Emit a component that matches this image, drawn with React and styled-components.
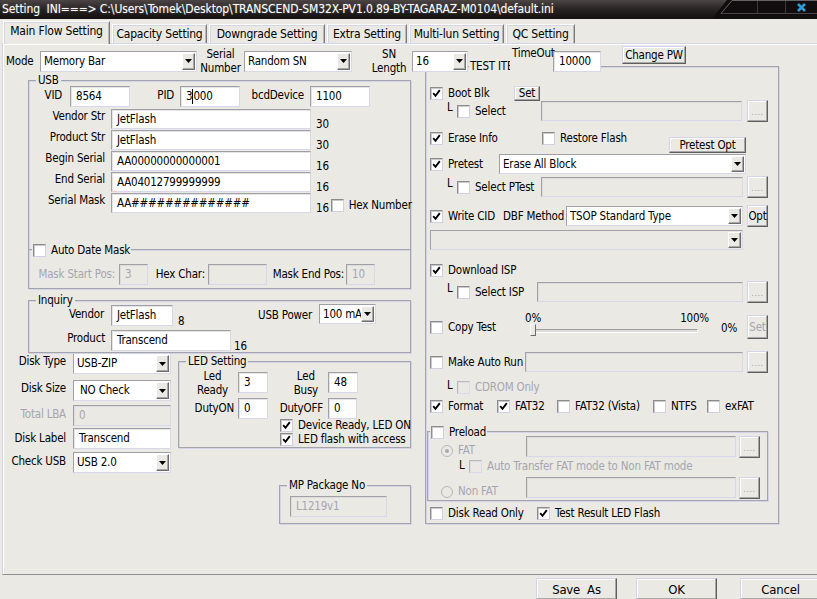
import React from "react";
import styled, { createGlobalStyle, css } from "styled-components";

const BG = "#eae9e4";
const DIS = "#a6a6b0";
const LAV = "#d3d3ea";
const EDGE = "#a4a4ac";

const TITLE =
  "Setting  INI===> C:\\Users\\Tomek\\Desktop\\TRANSCEND-SM32X-PV1.0.89-BY-TAGARAZ-M0104\\default.ini";

const GlobalStyle = createGlobalStyle`
  * { box-sizing: border-box; }
  html, body { margin: 0; padding: 0; background: ${BG}; }
  body {
    font-family: "DejaVu Sans Condensed", "Liberation Sans Narrow", "Liberation Sans", sans-serif;
    font-size: 11.5px;
    letter-spacing: -0.2px;
    line-height: 13px;
    color: #000;
  }
`;

// shared spacing props
const place = css`
  margin-top: ${(p) => p.$mt || 0}px;
  margin-left: ${(p) => p.$ml || 0}px;
  margin-bottom: ${(p) => p.$mb || 0}px;
  align-self: ${(p) => p.$self || "auto"};
`;

const Window = styled.div`
  width: 817px;
  height: 599px;
  overflow: hidden;
  display: flex;
  flex-direction: column;
  background: ${BG};
`;

const TitleBar = styled.div`
  flex: none;
  height: 19px;
  display: flex;
  align-items: center;
  padding-left: 2px;
  color: #fff;
  background: linear-gradient(to bottom, #4d4545 0%, #2b2525 45%, #131010 100%);
`;

const TitleText = styled.span`
  flex: 1;
  font-size: 12px;
  letter-spacing: -0.1px;
  white-space: pre;
  overflow: hidden;
  text-shadow: 0 0 2px rgba(255, 255, 255, 0.35);
`;

const CtlSvg = styled.svg`
  flex: none;
`;

const TabStrip = styled.div`
  flex: none;
  height: 24px;
  display: flex;
  align-items: flex-end;
  gap: 2px;
  padding-left: 3px;
  position: relative;
  z-index: 3;
`;

const Tab = styled.div`
  flex: none;
  width: ${(p) => p.$w}px;
  height: ${(p) => (p.$active ? 23 : 19)}px;
  margin-bottom: ${(p) => (p.$active ? -1 : 0)}px;
  padding-bottom: ${(p) => (p.$active ? 3 : 0)}px;
  display: flex;
  align-items: center;
  justify-content: center;
  white-space: nowrap;
  font-size: 12px;
  background: ${BG};
  border: 1px solid;
  border-bottom: none;
  border-color: #fff #7c7c7c transparent #fff;
  box-shadow: inset 1px 1px 0 ${LAV}, inset -1px 0 0 #b8b8b8;
`;

const Panel = styled.div`
  flex: none;
  height: 532px;
  margin-left: 2px;
  border-top: 1px solid ${LAV};
  border-left: 1px solid ${LAV};
  border-bottom: 1px solid #8c8c8c;
  box-shadow: inset 1px 1px 0 #fff;
`;

const TopRow = styled.div`
  position: relative;
  z-index: 2;
  height: 32px;
  padding-top: 2px;
  display: flex;
  align-items: center;
`;

const Columns = styled.div`
  display: flex;
  align-items: flex-start;
`;

const LeftCol = styled.div`
  flex: none;
  width: 401px;
  margin-left: 7px;
  display: flex;
  flex-direction: column;
`;

const RightCol = styled.div`
  flex: none;
  margin-left: 14px;
  margin-top: -10px;
`;

const Group = styled.div`
  position: relative;
  flex: none;
  width: ${(p) => p.$w}px;
  height: ${(p) => p.$h}px;
  border: 1px solid ${EDGE};
  box-shadow: inset 1px 1px 0 ${LAV}, 1px 1px 0 ${LAV};
  display: flex;
  flex-direction: column;
  ${place}
`;

const SubGroup = styled.div`
  position: relative;
  flex: none;
  margin-top: auto;
  height: 39px;
  border-top: 1px solid ${EDGE};
  box-shadow: inset 0 1px 0 ${LAV};
`;

const Legend = styled.div`
  position: absolute;
  top: ${(p) => p.$top ?? -8}px;
  left: ${(p) => p.$left ?? 7}px;
  padding: 0 ${(p) => p.$pad ?? 2}px;
  background: ${BG};
  line-height: 14px;
  display: flex;
  align-items: center;
  gap: 4px;
  white-space: nowrap;
`;

const Row = styled.div`
  flex: none;
  display: flex;
  align-items: ${(p) => p.$align || "center"};
  height: ${(p) => (p.$h ? `${p.$h}px` : "auto")};
  margin-top: ${(p) => p.$mt || 0}px;
  padding-left: ${(p) => p.$pl || 0}px;
`;

const Label = styled.div`
  flex: none;
  width: ${(p) => p.$w}px;
  padding-right: ${(p) => p.$pr ?? 6}px;
  padding-top: ${(p) => p.$pt ?? 0}px;
  text-align: ${(p) => p.$align || "right"};
  color: ${(p) => (p.$disabled ? DIS : "#000")};
  white-space: nowrap;
  ${place}
`;

const Stack = styled.div`
  flex: none;
  width: ${(p) => p.$w}px;
  height: ${(p) => p.$h || 21}px;
  display: flex;
  align-items: center;
  justify-content: ${(p) => p.$justify || "center"};
  padding-right: ${(p) => p.$pr || 0}px;
  ${place}
`;

const Lines = styled.span`
  text-align: center;
  line-height: 14px;
  white-space: nowrap;
`;

const Count = styled.span`
  flex: none;
  width: ${(p) => (p.$w ? `${p.$w}px` : "auto")};
  align-self: flex-end;
  margin-left: ${(p) => p.$ml ?? 5}px;
  margin-bottom: -2px;
`;

const TextBox = styled.div`
  flex: none;
  width: ${(p) => p.$w}px;
  height: ${(p) => p.$h || 21}px;
  display: flex;
  align-items: center;
  padding-left: ${(p) => p.$pl ?? 5}px;
  white-space: nowrap;
  overflow: hidden;
  background: ${(p) => (p.$disabled ? BG : "#fff")};
  color: ${(p) => (p.$disabled ? DIS : "#000")};
  border: 1px solid;
  border-color: #a0a0a6 #d8d8ec #d8d8ec #a0a0a6;
  box-shadow: inset 1px 1px 0 ${(p) => (p.$disabled ? "#dcdcdc" : "#e4e4e4")};
  ${place}
`;

const Caret = styled.span`
  display: inline-block;
  width: 1px;
  height: 15px;
  background: #000;
`;

const SelectBox = styled.div`
  flex: none;
  width: ${(p) => p.$w}px;
  height: ${(p) => p.$h || 21}px;
  display: flex;
  align-items: stretch;
  padding: 1px 1px 1px 3px;
  background: ${(p) => (p.$disabled ? BG : "#fff")};
  border: 1px solid;
  border-color: #a0a0a6 #d8d8ec #d8d8ec #a0a0a6;
  ${place}
`;

const SelectText = styled.span`
  flex: 1;
  display: flex;
  align-items: center;
  white-space: nowrap;
  overflow: hidden;
`;

const ArrowBtn = styled.span`
  flex: none;
  width: 13px;
  display: flex;
  align-items: center;
  justify-content: center;
  background: ${BG};
  border: 1px solid;
  border-color: #fff #6c6c6c #6c6c6c #fff;
  box-shadow: inset -1px -1px 0 #a8a8a8;
`;

const Btn = styled.div`
  flex: none;
  width: ${(p) => p.$w}px;
  height: ${(p) => p.$h || 22}px;
  display: flex;
  align-items: center;
  justify-content: center;
  white-space: nowrap;
  font-size: ${(p) => p.$fs || 11.5}px;
  color: ${(p) => (p.$disabled ? DIS : "#000")};
  background: ${BG};
  border: 1px solid;
  border-color: ${LAV} #5e5e5e #5e5e5e ${LAV};
  box-shadow: inset -1px -1px 0 #a8a8a8, inset 1px 1px 0 #fff;
  ${place}
`;

const Dots = styled.span`
  font-size: 9px;
  letter-spacing: 0.5px;
  color: #a0a0aa;
  margin-top: 2px;
`;

const Box = styled.span`
  flex: none;
  width: 13px;
  height: 13px;
  display: inline-flex;
  align-items: center;
  justify-content: center;
  background: ${(p) => (p.$disabled ? BG : "#fff")};
  border: 1px solid;
  border-color: ${(p) => (p.$disabled ? "#b8b8c0 #dadaea #dadaea #b8b8c0" : "#8c8c90 #cfcfe6 #cfcfe6 #8c8c90")};
  box-shadow: inset 1px 1px 0 ${(p) => (p.$disabled ? "#dedede" : "#cacaca")};
`;

const CheckWrap = styled.div`
  flex: none;
  display: flex;
  align-items: center;
  gap: 5px;
  width: ${(p) => (p.$w ? `${p.$w}px` : "auto")};
  color: ${(p) => (p.$disabled ? DIS : "#000")};
  white-space: nowrap;
  ${place}
`;

const RadioDot = styled.span`
  flex: none;
  width: 12px;
  height: 12px;
  border-radius: 50%;
  border: 1px solid #b6b6c0;
  background: ${BG};
  display: inline-flex;
  align-items: center;
  justify-content: center;
  &::after {
    content: "";
    width: 4px;
    height: 4px;
    border-radius: 50%;
    background: ${(p) => (p.$on ? "#a8a8b2" : "transparent")};
  }
`;

const Ell = styled.span`
  flex: none;
  width: 10px;
  align-self: flex-start;
  margin-top: ${(p) => p.$mt ?? 1}px;
`;

const Slider = styled.div`
  flex: none;
  width: 196px;
  height: 25px;
`;

const PctRow = styled.div`
  width: 184px;
  height: 11px;
  line-height: 11px;
  display: flex;
  justify-content: space-between;
`;

const Track = styled.div`
  position: relative;
  width: 168px;
  height: 4px;
  margin: 5px 0 0 5px;
  background: #dcdcdc;
  border: 1px solid;
  border-color: #9c9c9c #fff #fff #9c9c9c;
`;

const Thumb = styled.span`
  position: absolute;
  left: -1px;
  top: -6px;
  width: 6px;
  height: 12px;
  background: ${BG};
  border: 1px solid;
  border-color: #fff #6c6c6c #6c6c6c #fff;
`;

const Footer = styled.div`
  flex: none;
  height: 24px;
  display: flex;
  align-items: flex-start;
  padding: 3px 0 0 536px;
`;

const TimeOutLabel = styled.div`
  flex: none;
  align-self: flex-start;
  width: 43px;
  height: 24px;
  margin-left: 42px;
  padding: 1px 0 0 2px;
  background: ${BG};
  white-space: nowrap;
`;

const DiskCol = styled.div`
  flex: none;
  width: 171px;
  display: flex;
  flex-direction: column;
`;

const SideCol = styled.div`
  flex: none;
  width: 230px;
  display: flex;
  flex-direction: column;
  align-items: flex-end;
`;

const Tick = () => (
  <svg width="9" height="9" viewBox="0 0 9 9">
    <path d="M1.2 4.2 L3.5 6.8 L7.8 1.2" stroke="#000" strokeWidth="1.9" fill="none" />
  </svg>
);

const Check = ({ on, disabled, label, ...rest }) => (
  <CheckWrap $disabled={disabled} {...rest}>
    <Box $disabled={disabled}>{on && <Tick />}</Box>
    {label && <span>{label}</span>}
  </CheckWrap>
);

const Radio = ({ on, label, ...rest }) => (
  <CheckWrap $disabled {...rest}>
    <RadioDot $on={on} />
    <span>{label}</span>
  </CheckWrap>
);

const Select = ({ value, disabled, ...rest }) => (
  <SelectBox $disabled={disabled} {...rest}>
    <SelectText>{value}</SelectText>
    <ArrowBtn>
      <svg width="7" height="4" viewBox="0 0 7 4">
        <path d="M0 0 H7 L3.5 4 Z" fill={disabled ? "#b0b0b8" : "#000"} />
      </svg>
    </ArrowBtn>
  </SelectBox>
);

const Browse = (props) => (
  <Btn $w={21} $h={22} {...props}>
    <Dots>....</Dots>
  </Btn>
);

const WindowButtons = () => (
  <CtlSvg width="105" height="19" viewBox="0 0 105 19">
    <polygon points="0,19 15,0 105,0 105,19" fill="#0f0d0d" />
    <path d="M9 13.5 L20 0.5 H105" stroke="#676262" fill="none" />
    <path d="M9 13.5 H105" stroke="#4a4545" />
    <path d="M45.5 1 V13 M73.5 1 V13" stroke="#3c3838" />
    <path d="M86 4 L93 11 M93 4 L86 11" stroke="#2d9bd9" strokeWidth="2.6" />
  </CtlSvg>
);

const tabs = [
  { name: "Main Flow Setting", w: 107, active: true },
  { name: "Capacity Setting", w: 95 },
  { name: "Downgrade Setting", w: 116 },
  { name: "Extra Setting", w: 80 },
  { name: "Multi-lun Setting", w: 95 },
  { name: "QC Setting", w: 69 },
];

const strRows = [
  { label: "Vendor Str", value: "JetFlash", count: "30", mt: 2 },
  { label: "Product Str", value: "JetFlash", count: "30", mt: 1 },
  { label: "Begin Serial", value: "AA00000000000001", count: "16", mt: 1 },
  { label: "End Serial", value: "AA04012799999999", count: "16", mt: 1 },
];

export default function App() {
  return (
    <>
      <GlobalStyle />
      <Window>
        <TitleBar>
          <TitleText>{TITLE}</TitleText>
          <WindowButtons />
        </TitleBar>

        <TabStrip>
          {tabs.map((t) => (
            <Tab key={t.name} $w={t.w} $active={t.active}>
              {t.name}
            </Tab>
          ))}
        </TabStrip>

        <Panel>
          <TopRow>
            <Label $w={37} $align="left" $pr={0}>
              &nbsp;Mode
            </Label>
            <Select $w={157} value="Memory Bar" />
            <Stack $w={47} $h={30}>
              <Lines>
                Serial
                <br />
                Number
              </Lines>
            </Stack>
            <Select $w={108} value="Random SN" />
            <Stack $w={46} $h={30} $ml={14}>
              <Lines>
                SN
                <br />
                Length
              </Lines>
            </Stack>
            <Select $w={56} value="16" />
            <TimeOutLabel>TimeOut</TimeOutLabel>
            <TextBox $w={48}>10000</TextBox>
            <Btn $w={64} $h={18} $ml={21} $self="flex-start">
              Change PW
            </Btn>
          </TopRow>

          <Columns>
            <LeftCol>
              <Group $w={383} $h={209} $mt={4} $ml={18}>
                <Legend>USB</Legend>
                <Row $mt={5} $h={21} $align="flex-start">
                  <Label $w={41} $pr={8} $pt={3}>VID</Label>
                  <TextBox $w={60}>8564</TextBox>
                  <Label $w={50} $pt={3}>PID</Label>
                  <TextBox $w={60}>
                    3<Caret />
                    000
                  </TextBox>
                  <Label $w={70} $pt={3}>bcdDevice</Label>
                  <TextBox $w={60}>1100</TextBox>
                </Row>
                {strRows.map((r) => (
                  <Row key={r.label} $mt={r.mt} $h={20} $align="flex-start">
                    <Label $w={82} $pt={1}>{r.label}</Label>
                    <TextBox $w={200} $h={20}>{r.value}</TextBox>
                    <Count>{r.count}</Count>
                  </Row>
                ))}
                <Row $mt={1} $h={20} $align="flex-start">
                  <Label $w={82} $pt={1}>Serial Mask</Label>
                  <TextBox $w={200} $h={20}>AA##############</TextBox>
                  <Count>16</Count>
                  <Check label="Hex Number" $ml={2} $self="flex-end" $mb={1} />
                </Row>
                <SubGroup>
                  <Legend $left={3} $pad={1} $top={-7}>
                    <Check label="Auto Date Mask" />
                  </Legend>
                  <Row $mt={14} $h={21} $align="flex-start">
                    <Label $w={90} $pr={4} $pt={4} $disabled>Mask Start Pos:</Label>
                    <TextBox $w={29} $disabled>3</TextBox>
                    <Label $w={60} $pr={3} $pt={4}>Hex Char:</Label>
                    <TextBox $w={59} $disabled />
                    <Label $w={79} $pr={2} $pt={4}>Mask End Pos:</Label>
                    <TextBox $w={29} $disabled>10</TextBox>
                  </Row>
                </SubGroup>
              </Group>

              <Group $w={383} $h={53} $mt={11} $ml={18}>
                <Legend>Inquiry</Legend>
                <Row $mt={4} $h={21} $align="flex-start">
                  <Label $w={82} $pr={7} $pt={3}>Vendor</Label>
                  <TextBox $w={62}>JetFlash</TextBox>
                  <Count $w={10}>8</Count>
                  <Label $w={131} $pr={7} $pt={4}>USB Power</Label>
                  <Select $w={57} $h={20} $mt={-1} value="100 mA" />
                </Row>
                <Row $mt={4} $h={21} $align="flex-start">
                  <Label $w={82} $pt={2}>Product</Label>
                  <TextBox $w={120}>Transcend</TextBox>
                  <Count $ml={3}>16</Count>
                </Row>
              </Group>

              <Row $align="flex-start">
                <DiskCol>
                  <Row $align="flex-start">
                    <Label $w={63} $pr={7} $pt={2}>Disk Type</Label>
                    <Select $w={98} value="USB-ZIP" />
                  </Row>
                  <Row $mt={6} $align="flex-start">
                    <Label $w={63} $pr={7} $pt={2}>Disk Size</Label>
                    <Select $w={98} value={"\u00a0NO Check"} />
                  </Row>
                  <Row $mt={4} $align="flex-start">
                    <Label $w={63} $pr={7} $pt={3} $disabled>Total LBA</Label>
                    <TextBox $w={98} $disabled>0</TextBox>
                  </Row>
                  <Row $mt={2} $align="flex-start">
                    <Label $w={63} $pr={7} $pt={4}>Disk Label</Label>
                    <TextBox $w={98}>Transcend</TextBox>
                  </Row>
                  <Row $mt={3} $align="flex-start">
                    <Label $w={63} $pr={7} $pt={3}>Check USB</Label>
                    <Select $w={98} value="USB 2.0" />
                  </Row>
                </DiskCol>

                <SideCol>
                  <Group $w={233} $h={87} $mt={8}>
                    <Legend>LED Setting</Legend>
                    <Row $mt={10} $h={21} $pl={7}>
                      <Stack $w={52} $justify="flex-end" $pr={10}>
                        <Lines>
                          Led
                          <br />
                          Ready
                        </Lines>
                      </Stack>
                      <TextBox $w={30}>3</TextBox>
                      <Stack $w={60} $justify="flex-end" $pr={10}>
                        <Lines>
                          Led
                          <br />
                          Busy
                        </Lines>
                      </Stack>
                      <TextBox $w={30}>48</TextBox>
                    </Row>
                    <Row $mt={5} $h={21} $pl={7} $align="flex-start">
                      <Label $w={52} $pr={4} $pt={4}>DutyON</Label>
                      <TextBox $w={30}>0</TextBox>
                      <Label $w={60} $pr={5} $pt={4}>DutyOFF</Label>
                      <TextBox $w={29}>0</TextBox>
                    </Row>
                    <Row $pl={101}>
                      <Check on label="Device Ready, LED ON" $w={128} />
                    </Row>
                    <Row $pl={101} $mt={1}>
                      <Check on label="LED flash with access" $w={128} />
                    </Row>
                  </Group>

                  <Group $w={132} $h={39} $mt={37}>
                    <Legend>MP Package No</Legend>
                    <TextBox $w={97} $disabled $mt={10} $ml={10}>L1219v1</TextBox>
                  </Group>
                </SideCol>
              </Row>
            </LeftCol>

            <RightCol>
              <Group $w={354} $h={458}>
                <Legend $left={43} $pad={1}>TEST ITEM</Legend>

                <Row $mt={19} $h={15} $pl={4}>
                  <Check on label="Boot Blk" $w={84} />
                  <Btn $w={26} $h={15}>Set</Btn>
                </Row>
                <Row $mt={-1} $h={22} $pl={21}>
                  <Ell>L</Ell>
                  <Check label="Select" $w={84} />
                  <TextBox $w={201} $h={20} $disabled />
                  <Browse $ml={5} />
                </Row>

                <Row $h={32} $pl={4} $align="flex-start">
                  <Check on label="Erase Info" $w={112} $mt={10} />
                  <Check label="Restore Flash" $w={127} $mt={10} />
                  <Btn $w={77} $h={16} $self="flex-end" $mb={1}>Pretest Opt</Btn>
                </Row>
                <Row $h={20} $pl={4}>
                  <Check on label="Pretest" $w={69} />
                  <Select $w={247} $h={20} value="Erase All Block" />
                </Row>
                <Row $mt={2} $h={22} $pl={21}>
                  <Ell>L</Ell>
                  <Check label="Select PTest" $w={84} />
                  <TextBox $w={202} $h={20} $disabled />
                  <Browse $ml={4} />
                </Row>

                <Row $mt={7} $h={22} $pl={4}>
                  <Check on label="Write CID" $w={73} />
                  <Label $w={63} $align="left" $pr={0}>DBF Method</Label>
                  <Select $w={177} $h={20} value="TSOP Standard Type" />
                  <Btn $w={21} $h={22} $ml={4}>Opt</Btn>
                </Row>
                <Row $mt={3} $pl={4}>
                  <Select $w={313} $h={20} $disabled value="" />
                </Row>

                <Row $mt={14} $h={13} $pl={4}>
                  <Check on label="Download ISP" />
                </Row>
                <Row $mt={4} $h={22} $pl={21}>
                  <Ell>L</Ell>
                  <Check label="Select ISP" $w={80} />
                  <TextBox $w={206} $h={20} $disabled />
                  <Browse $ml={4} />
                </Row>

                <Row $mt={10} $h={25} $pl={4} $align="flex-start">
                  <Check label="Copy Test" $w={95} $mt={8} />
                  <Slider>
                    <PctRow>
                      <span>0%</span>
                      <span>100%</span>
                    </PctRow>
                    <Track>
                      <Thumb />
                    </Track>
                  </Slider>
                  <Label $w={26} $align="left" $pr={0} $mt={9}>0%</Label>
                  <Btn $w={21} $h={24} $mt={2} $disabled>Set</Btn>
                </Row>

                <Row $mt={13} $h={22} $pl={4}>
                  <Check label="Make Auto Run" $w={95} />
                  <TextBox $w={218} $h={20} $disabled />
                  <Browse $ml={4} />
                </Row>
                <Row $mt={8} $h={13} $pl={21}>
                  <Ell $mt={-2}>L</Ell>
                  <Check label="CDROM Only" disabled />
                </Row>

                <Row $mt={6} $h={13} $pl={4}>
                  <Check on label="Format" $w={67} />
                  <Check on label="FAT32" $w={60} />
                  <Check label="FAT32 (Vista)" $w={96} />
                  <Check label="NTFS" $w={54} />
                  <Check label="exFAT" />
                </Row>

                <Group $w={341} $h={70} $mt={18} $ml={1}>
                  <Legend $left={2} $pad={1} $top={-7}>
                    <Check label="Preload" />
                  </Legend>
                  <Row $mt={4} $h={22} $pl={13}>
                    <Radio on label="FAT" $w={85} $self="flex-end" $mb={1} />
                    <TextBox $w={210} $h={21} $disabled $self="flex-start" />
                    <Browse $ml={3} />
                  </Row>
                  <Row $mt={2} $h={13} $pl={31}>
                    <Ell $mt={-1}>L</Ell>
                    <Check disabled label="Auto Transfer FAT mode to Non FAT mode" />
                  </Row>
                  <Row $mt={4} $h={22} $pl={13}>
                    <Radio label="Non FAT" $w={85} $self="flex-end" $mb={1} />
                    <TextBox $w={210} $h={21} $disabled $self="flex-start" />
                    <Browse $ml={3} />
                  </Row>
                </Group>

                <Row $mt={6} $h={13} $pl={4}>
                  <Check label="Disk Read Only" $w={107} />
                  <Check on label="Test Result LED Flash" />
                </Row>
              </Group>
            </RightCol>
          </Columns>
        </Panel>

        <Footer>
          <Btn $w={81} $h={22} $fs={13}>Save&nbsp;&nbsp;As</Btn>
          <Btn $w={81} $h={22} $fs={13} $ml={19}>OK</Btn>
          <Btn $w={81} $h={22} $fs={13} $ml={23}>Cancel</Btn>
        </Footer>
      </Window>
    </>
  );
}
